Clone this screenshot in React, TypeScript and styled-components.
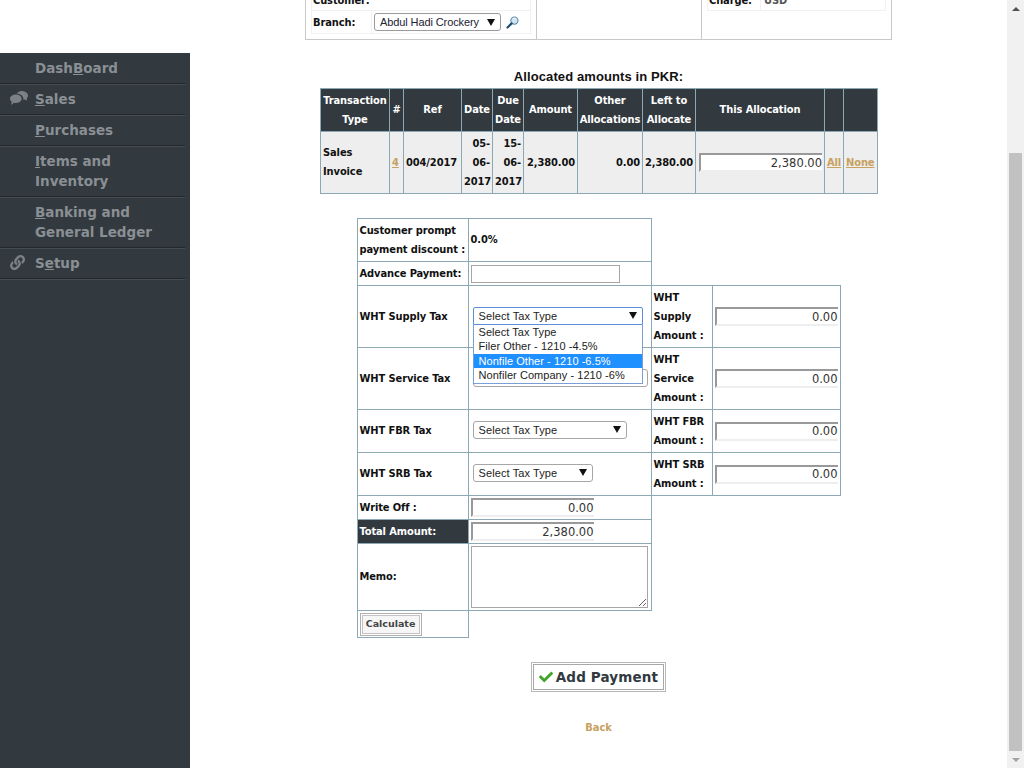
import React from "react";
import styled, { createGlobalStyle } from "styled-components";
import { FaLink, FaCheck } from "react-icons/fa";

const Global = createGlobalStyle`
  html, body { margin: 0; padding: 0; background: #fff; overflow: hidden; }
  #root { width: 1024px; height: 768px; }
  * { box-sizing: border-box; }
`;

const Condensed = `"DejaVu Sans Condensed", "DejaVu Sans", Verdana, sans-serif`;
const Line = "#8ca8b5";

const Screen = styled.div`
  display: flex; width: 1024px; height: 768px; overflow: hidden; background: #fff;
  font-family: ${Condensed}; color: #111;
`;
const Sidebar = styled.nav`
  width: 190px; flex: none; margin-top: 53px; background: #32393f;
`;
const NavItem = styled.div`
  position: relative; width: 185px; padding: 5px 10px 5px 35px; height: ${(p: { $lines?: number }) => (p.$lines === 2 ? 51 : 31)}px;
  font-family: "DejaVu Sans", sans-serif; font-size: 13.5px; line-height: 20px; font-weight: 700; color: #8a8f94;
  border-bottom: 1px solid #23282c; box-shadow: 0 1px 0 #454c52;
  u { text-decoration: underline; text-underline-offset: 1px; }
`;
const NavIcon = styled.span`
  position: absolute; left: 10px; top: 7px; display: flex; font-size: 15px; color: #7c8185;
`;
const Main = styled.main`
  flex: 1; min-width: 0; display: flex; flex-direction: column; align-items: center;
  font-size: 11px; line-height: 19px; font-weight: 700; letter-spacing: -.1px;
`;
const TopPanel = styled.section`
  width: 587px; height: 40px; flex: none; display: grid; grid-template-columns: 230px 165px 1fr;
  border: solid #c8c8c8; border-width: 0 1px 1px 1px;
`;
const TopCell = styled.div`
  display: flex; flex-direction: column; justify-content: flex-end; padding: 0 5px 5px 5px; overflow: hidden;
  & + & { border-left: 1px solid #c8c8c8; }
`;
const TopRow = styled.div`
  display: grid; grid-template-columns: ${(p: { $label: number }) => p.$label}px 1fr; align-items: center; flex: none;
  border: 1px solid #f1f1f1; border-top: none; font-weight: 400;
  & > span { padding-left: 1px; }
  & > span + * { border-left: 1px solid #f1f1f1; }
  font-size: 11px;
`;
const TopLabel = styled.span`
  font-weight: 700; height: 12px; display: flex; align-items: flex-end; line-height: 19px;
`;
const BranchLabel = styled.span`
  font-weight: 700; height: 22px; display: flex; align-items: center;
`;
const BranchValue = styled.div`
  display: flex; align-items: center; gap: 5px; padding-left: 2px; height: 22px;
`;
const BranchSelect = styled.div`
  width: 127px; height: 18px; border: 1px solid #9b9b9b; border-radius: 3px; padding: 0 5px;
  display: flex; align-items: center; justify-content: space-between;
  font: 400 11px "Liberation Sans", Arial, sans-serif; color: #223;
`;
const ValueText = styled.div`
  height: 12px; display: flex; align-items: flex-end; font-weight: 700; color: #555; padding-left: 3px; line-height: 19px;
`;
const Spacer = styled.div`
  height: 23px; flex: none;
`;
const Arrow = styled.span`
  width: 0; height: 0; border: 4px solid transparent; border-top: 7px solid #111; border-bottom: 0; flex: none;
`;
const Title = styled.h2`
  margin: 29px 0 0; font: 700 13px/15px "Liberation Sans", Arial, sans-serif; color: #111; height: 19px; letter-spacing: .1px;
`;
const AllocTable = styled.table`
  width: 557px; margin-left: 1px; border-collapse: collapse; table-layout: fixed; font-size: 11px;
  th, td { border: 1px solid ${Line}; padding: 0 1px; }
  th { background: #32393f; color: #fff; text-align: center; line-height: 19px; height: 43px; }
  td { background: #eee; height: 62px; font-weight: 700; line-height: 19px; padding: 0 2px; }
`;
const HeadOne = styled.th`
  padding-bottom: 2px !important;
`;
const TypeCell = styled.td`
  padding-bottom: 2px !important;
`;
const Num = styled.td`
  text-align: right;
`;
const LinkText = styled.a`
  color: #c8a060; text-decoration: underline; font-weight: 700;
`;
const AmountInput = styled.input`
  display: block; margin-left: ${(p: { $ml?: number }) => p.$ml ?? 0}px; width: ${(p: { $w: number }) => p.$w}px; height: 19px;
  border: solid; border-width: 2px 0 2px 2px; border-color: #999 #eee #eee #999; background: #fff; padding: 0;
  text-align: right; font: 400 11.5px "DejaVu Sans", sans-serif; color: #333; outline: none;
`;
const FormTable = styled.table`
  margin-top: 24px; width: 484px; border-collapse: collapse; table-layout: fixed; font-size: 11px;
  td { padding: 0 2px; line-height: 19px; font-weight: 700; vertical-align: middle; }
`;
const Cell = styled.td<{ $h?: number; $up?: boolean }>`
  border: 1px solid ${Line};
  height: ${(p) => p.$h ?? 24}px;
  && { padding-bottom: ${(p) => (p.$up ? 2 : 0)}px; }
`;
const Blank = styled.td``;
const DarkCell = styled(Cell)`
  background: #32393f; color: #fff;
`;
const SelectWrap = styled.div`
  position: relative; width: ${(p: { $w: number }) => p.$w}px; margin: 0 0 2px 2px;
`;
const TaxSelect = styled.select<{ $focus?: boolean }>`
  appearance: none; display: block; width: 100%; height: 18px; padding: 0 5px; background: #fff;
  border: 1px solid ${(p) => (p.$focus ? "#5b8fd9" : "#a6a6a6")}; border-radius: ${(p) => (p.$focus ? "2px 2px 0 0" : "3px")};
  font: 400 11px "Liberation Sans", Arial, sans-serif; color: #222; outline: none; letter-spacing: .1px;
`;
const SelectArrow = styled(Arrow)`
  position: absolute; right: 6px; top: 5px; pointer-events: none;
`;
const Popup = styled.ul`
  position: absolute; left: 0; top: 18px; width: 100%; margin: 0; padding: 0; list-style: none; z-index: 3;
  background: #fff; border: 1px solid #7a9fd6; border-top: none;
  font: 400 11px/14.5px "Liberation Sans", Arial, sans-serif; color: #222; letter-spacing: .05px;
`;
const Option = styled.li<{ $active?: boolean }>`
  padding: 0 5px; white-space: nowrap;
  background: ${(p) => (p.$active ? "#1e90ff" : "transparent")}; color: ${(p) => (p.$active ? "#fff" : "inherit")};
`;
const PlainInput = styled.input`
  display: block; width: 149px; height: 18px; margin: 0; border: 1px solid #a6a6a6; background: #fff; padding: 0; outline: none;
`;
const Memo = styled.textarea`
  display: block; width: 177px; height: 62px; border: 1px solid #a6a6a6; margin: 0; padding: 0; background: #fff; outline: none; resize: both;
`;
const CalcButton = styled.button`
  display: block; width: 62px; height: 23px; padding: 0 0 2px; background: #f6f6f6; border: 1px solid #b0b0b0;
  box-shadow: inset 0 0 0 1px #fff, inset 0 0 0 2px #c4c4c4;
  font: 700 9.5px "DejaVu Sans", sans-serif; color: #444;
`;
const AddButton = styled.button`
  margin-top: 24px; width: 135px; height: 30px; padding: 0; display: flex; align-items: center; justify-content: center; gap: 3px;
  background: #fff; border: 1px solid #b8b8b8; box-shadow: inset 0 0 0 1px #fff, inset 0 0 0 2px #a8a8a8;
  font: 700 13.5px "DejaVu Sans", sans-serif; color: #32393f; flex: none; letter-spacing: .15px;
  svg { color: #3fa52a; font-size: 14px; }
`;
const Back = styled.a`
  margin-top: 28px; color: #c8a060; font-size: 11px; font-weight: 700; line-height: 16px; text-decoration: none;
`;
const Scrollbar = styled.div`
  width: 17px; flex: none; background: #f1f1f1; display: flex; flex-direction: column; align-items: center;
`;
const ScrollBtn = styled.div`
  height: 17px; flex: none; display: flex; align-items: center; justify-content: center;
`;
const Thumb = styled.div`
  width: 13px; height: 598px; margin-top: 136px; background: #c1c1c1; flex: none;
`;
const ScrollUp = styled.span`
  width: 0; height: 0; border: 4px solid transparent; border-bottom: 4px solid #505050; border-top: 0;
`;
const ScrollDown = styled.span`
  width: 0; height: 0; border: 4px solid transparent; border-top: 4px solid #a3a3a3; border-bottom: 0;
`;

const Lens = () => (
  <svg width="13" height="13" viewBox="0 0 13 13" aria-hidden="true">
    <circle cx="8.4" cy="4.6" r="3.6" fill="#cfe3f2" stroke="#5c8aa8" strokeWidth="1.1" />
    <path d="M7 2.8 A2.4 2.4 0 0 1 9.8 2.6" fill="none" stroke="#fff" strokeWidth="1" />
    <path d="M5.6 7.4 L1.5 11.5" stroke="#1f4f70" strokeWidth="2.2" strokeLinecap="round" />
  </svg>
);

const Bubbles = () => (
  <svg width="18" height="15" viewBox="0 0 18 15" aria-hidden="true" fill="currentColor">
    <path d="M11.5 0C14.6 0 18 1.7 18 4.6c0 1.2-.5 2.2-1.3 3l.6 2-2.6-1.1c-.4.1-.8.2-1.3.2.5-3.1-2.4-6-6.6-6.3C8 .9 9.6 0 11.5 0z" />
    <path d="M5.8 3.6C9 3.6 11.6 5.4 11.6 7.8S9 12 5.8 12c-.6 0-1.2-.1-1.7-.2L1 13.9l.7-3.1C.7 10 0 9 0 7.8 0 5.4 2.6 3.6 5.8 3.6z" />
  </svg>
);

const taxOptions = ["Select Tax Type", "Filer Other - 1210 -4.5%", "Nonfile Other - 1210 -6.5%", "Nonfiler Company - 1210 -6%"];

const TaxField = ({ w }: { w: number }) => (
  <SelectWrap $w={w}>
    <TaxSelect defaultValue="0"><option value="0">Select Tax Type</option></TaxSelect>
    <SelectArrow />
  </SelectWrap>
);

export default function App() {
  return (
    <Screen>
      <Global />
      <Sidebar>
        <NavItem>Dash<u>B</u>oard</NavItem>
        <NavItem><NavIcon><Bubbles /></NavIcon><u>S</u>ales</NavItem>
        <NavItem><u>P</u>urchases</NavItem>
        <NavItem $lines={2}><u>I</u>tems and Inventory</NavItem>
        <NavItem $lines={2}><u>B</u>anking and General Ledger</NavItem>
        <NavItem><NavIcon><FaLink /></NavIcon>S<u>e</u>tup</NavItem>
      </Sidebar>
      <Main>
        <TopPanel>
          <TopCell>
            <TopRow $label={59}><TopLabel>Customer:</TopLabel><div /></TopRow>
            <TopRow $label={59}>
              <BranchLabel>Branch:</BranchLabel>
              <BranchValue>
                <BranchSelect>Abdul Hadi Crockery <Arrow /></BranchSelect>
                <Lens />
              </BranchValue>
            </TopRow>
          </TopCell>
          <TopCell />
          <TopCell>
            <TopRow $label={52}><TopLabel>Charge:</TopLabel><ValueText>USD</ValueText></TopRow>
            <Spacer />
          </TopCell>
        </TopPanel>
        <Title>Allocated amounts in PKR:</Title>
        <AllocTable>
          <colgroup>
            {[69, 14, 58, 31, 31, 54, 65, 53, 129, 19, 34].map((w, i) => <col key={i} width={w} />)}
          </colgroup>
          <thead>
            <tr>
              <th>Transaction Type</th><HeadOne>#</HeadOne><HeadOne>Ref</HeadOne><HeadOne>Date</HeadOne><th>Due Date</th><HeadOne>Amount</HeadOne>
              <th>Other Allocations</th><th>Left to Allocate</th><HeadOne>This Allocation</HeadOne><th /><th />
            </tr>
          </thead>
          <tbody>
            <tr>
              <TypeCell>Sales Invoice</TypeCell>
              <td><LinkText>4</LinkText></td>
              <td>004/2017</td>
              <Num>05-06-2017</Num>
              <Num>15-06-2017</Num>
              <Num>2,380.00</Num>
              <Num>0.00</Num>
              <Num>2,380.00</Num>
              <td><AmountInput $w={123} $ml={1} readOnly value="2,380.00" /></td>
              <td><LinkText>All</LinkText></td>
              <td><LinkText>None</LinkText></td>
            </tr>
          </tbody>
        </AllocTable>
        <FormTable>
          <colgroup>
            <col width={111} /><col width={183} /><col width={61} /><col width={128} />
          </colgroup>
          <tbody>
            <tr>
              <Cell $h={43}>Customer prompt<br />payment discount :</Cell>
              <Cell $up>0.0%</Cell><Blank /><Blank />
            </tr>
            <tr>
              <Cell>Advance Payment:</Cell>
              <Cell><PlainInput /></Cell><Blank /><Blank />
            </tr>
            <tr>
              <Cell $h={62}>WHT Supply Tax</Cell>
              <Cell>
                <SelectWrap $w={170}>
                  <TaxSelect $focus defaultValue="0"><option value="0">Select Tax Type</option></TaxSelect>
                  <SelectArrow />
                  <Popup>
                    {taxOptions.map((t, i) => <Option key={t} $active={i === 2}>{t}</Option>)}
                  </Popup>
                </SelectWrap>
              </Cell>
              <Cell>WHT Supply Amount :</Cell>
              <Cell><AmountInput $w={123} readOnly value="0.00" /></Cell>
            </tr>
            <tr>
              <Cell $h={62}>WHT Service Tax</Cell>
              <Cell><TaxField w={175} /></Cell>
              <Cell>WHT Service Amount :</Cell>
              <Cell><AmountInput $w={123} readOnly value="0.00" /></Cell>
            </tr>
            <tr>
              <Cell $h={43} $up>WHT FBR Tax</Cell>
              <Cell><TaxField w={154} /></Cell>
              <Cell>WHT FBR Amount :</Cell>
              <Cell><AmountInput $w={123} readOnly value="0.00" /></Cell>
            </tr>
            <tr>
              <Cell $h={43} $up>WHT SRB Tax</Cell>
              <Cell><TaxField w={120} /></Cell>
              <Cell>WHT SRB Amount :</Cell>
              <Cell><AmountInput $w={123} readOnly value="0.00" /></Cell>
            </tr>
            <tr>
              <Cell>Write Off :</Cell>
              <Cell><AmountInput $w={123} readOnly value="0.00" /></Cell><Blank /><Blank />
            </tr>
            <tr>
              <DarkCell>Total Amount:</DarkCell>
              <Cell><AmountInput $w={123} readOnly value="2,380.00" /></Cell><Blank /><Blank />
            </tr>
            <tr>
              <Cell $h={67} $up>Memo:</Cell>
              <Cell><Memo /></Cell><Blank /><Blank />
            </tr>
            <tr>
              <Cell $h={27}><CalcButton>Calculate</CalcButton></Cell>
              <Blank /><Blank /><Blank />
            </tr>
          </tbody>
        </FormTable>
        <AddButton><FaCheck /> Add Payment</AddButton>
        <Back>Back</Back>
      </Main>
      <Scrollbar>
        <ScrollBtn><ScrollUp /></ScrollBtn>
        <Thumb />
        <ScrollBtn><ScrollDown /></ScrollBtn>
      </Scrollbar>
    </Screen>
  );
}
